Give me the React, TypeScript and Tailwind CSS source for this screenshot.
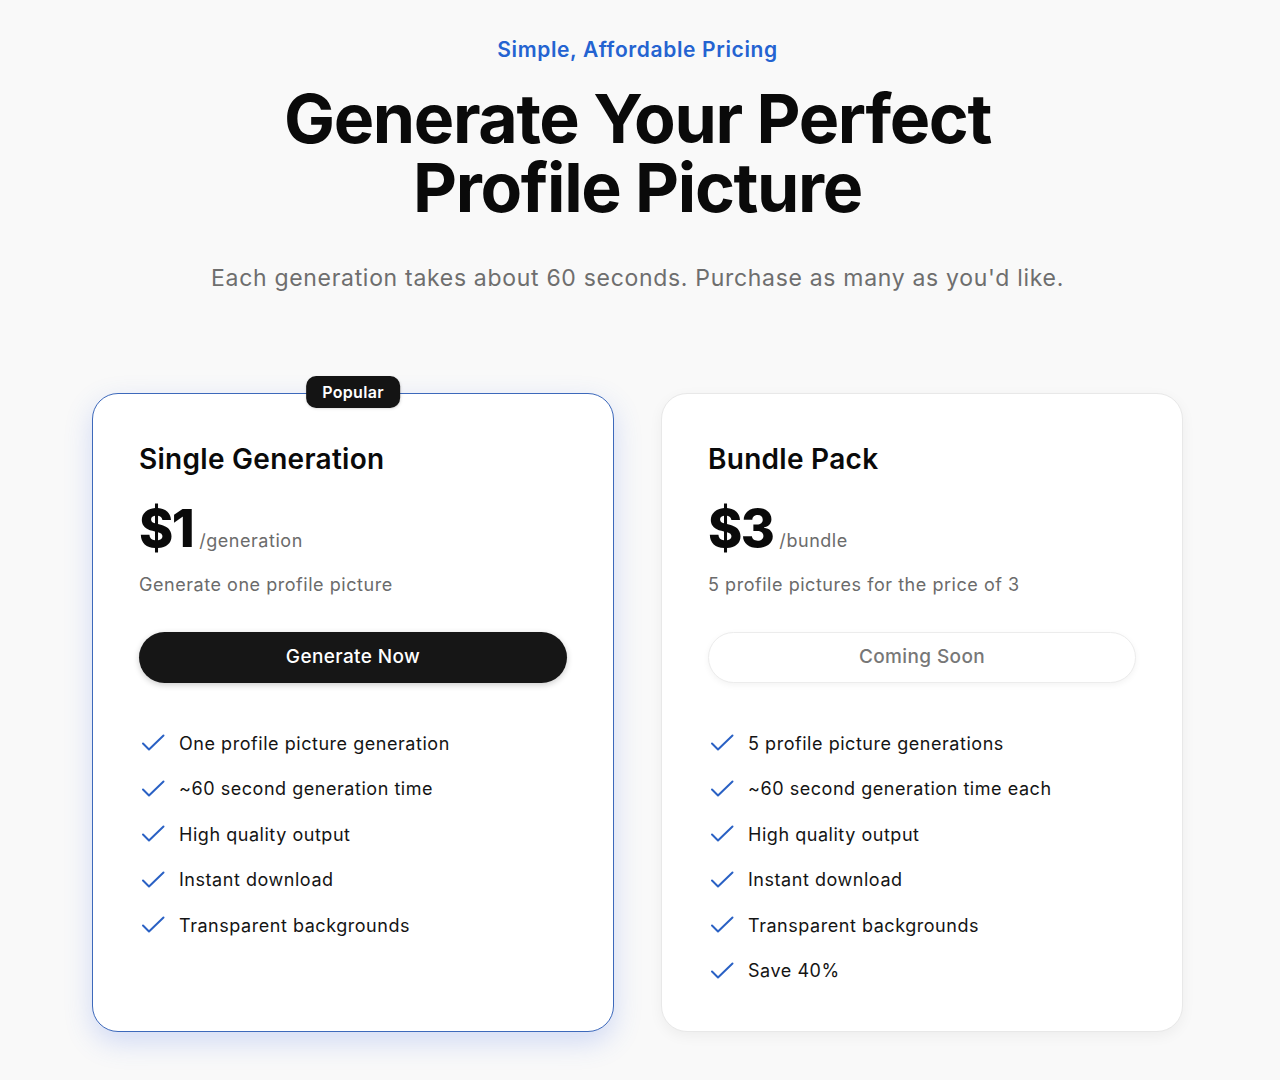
import { ReactNode } from 'react'

interface Plan {
  name: string
  price: string
  unit: string
  description: string
  features: string[]
  popular?: boolean
  cta: string
  disabled?: boolean
}

const plans: Plan[] = [
  {
    name: 'Single Generation',
    price: '$1',
    unit: '/generation',
    description: 'Generate one profile picture',
    cta: 'Generate Now',
    popular: true,
    features: [
      'One profile picture generation',
      '~60 second generation time',
      'High quality output',
      'Instant download',
      'Transparent backgrounds',
    ],
  },
  {
    name: 'Bundle Pack',
    price: '$3',
    unit: '/bundle',
    description: '5 profile pictures for the price of 3',
    cta: 'Coming Soon',
    disabled: true,
    features: [
      '5 profile picture generations',
      '~60 second generation time each',
      'High quality output',
      'Instant download',
      'Transparent backgrounds',
      'Save 40%',
    ],
  },
]

function CheckIcon() {
  return (
    <svg width="24" height="18" viewBox="0 0 24 18" fill="none" className="shrink-0">
      <path
        d="M2 9.5 L8 15.5 L22.5 1.5"
        stroke="#2a61c4"
        strokeWidth="2"
        strokeLinecap="round"
        strokeLinejoin="round"
      />
    </svg>
  )
}

function Feature({ children }: { children: ReactNode }) {
  return (
    <li className="flex items-center gap-[14px] pl-[2px] h-7 text-[18px] tracking-[0.03em] text-[#141414]">
      <CheckIcon />
      <span>{children}</span>
    </li>
  )
}

function PlanCard({ plan }: { plan: Plan }) {
  return (
    <div
      className={
        plan.popular
          ? 'relative bg-white rounded-[26px] border-[1.5px] border-[#3d69bb] shadow-[0_10px_28px_rgba(70,110,230,0.22)] px-[46px] pt-[49px] pb-[46px]'
          : 'relative bg-white rounded-[26px] border-[1.5px] border-[#e8e8e8] shadow-[0_4px_14px_rgba(0,0,0,0.05)] px-[46px] pt-[49px] pb-[46px]'
      }
    >
      {plan.popular && (
        <div className="absolute left-1/2 -translate-x-1/2 -top-[18px] bg-[#141414] text-white text-[16px] tracking-[0.02em] font-semibold rounded-[10px] h-[32px] px-[16px] flex items-center shadow-sm">
          Popular
        </div>
      )}
      <h3 className="text-[28px] leading-8 font-semibold tracking-[0.01em] text-[#0a0a0a]">{plan.name}</h3>
      <div className="mt-7 flex items-baseline gap-[6px]">
        <span className="text-[52px] leading-none font-extrabold tracking-[-0.03em] text-[#0a0a0a]">
          {plan.price}
        </span>
        <span className="text-[18px] tracking-[0.03em] text-[#6b6b6b]">{plan.unit}</span>
      </div>
      <p className="mt-4 text-[18px] leading-7 tracking-[0.03em] text-[#6b6b6b]">{plan.description}</p>
      <button
        className={
          plan.disabled
            ? 'mt-[33px] w-full h-[51px] rounded-full bg-white border border-[#ececec] shadow-[0_2px_6px_rgba(0,0,0,0.05)] text-[19px] tracking-[0.02em] font-medium text-[#777777]'
            : 'mt-[33px] w-full h-[51px] rounded-full bg-[#161616] shadow-[0_2px_6px_rgba(0,0,0,0.2)] text-[19px] tracking-[0.02em] font-medium text-white'
        }
      >
        {plan.cta}
      </button>
      <ul className="mt-[46px] flex flex-col gap-[17.5px]">
        {plan.features.map((f) => (
          <Feature key={f}>{f}</Feature>
        ))}
      </ul>
    </div>
  )
}

export default function App() {
  return (
    <div className="min-h-screen bg-[#f9f9f9] font-['Inter','Liberation_Sans',sans-serif] antialiased">
      <div className="ml-[92px] w-[1091px] pt-[36px] flex flex-col items-center text-center">
        <p className="text-[21px] leading-7 font-semibold tracking-[0.03em] text-[#2463d1]">
          Simple, Affordable Pricing
        </p>
        <h1 className="mt-5 text-[68px] leading-[69px] font-bold tracking-[-0.02em] text-[#0a0a0a]">
          Generate Your Perfect
          <br />
          Profile Picture
        </h1>
        <p className="mt-10 text-[23px] leading-8 tracking-[0.03em] text-[#6e6e6e]">
          Each generation takes about 60 seconds. Purchase as many as you'd like.
        </p>
      </div>
      <div className="ml-[92px] w-[1091px] mt-[99px] grid grid-cols-2 gap-[47px] text-left">
        {plans.map((p) => (
          <PlanCard key={p.name} plan={p} />
        ))}
      </div>
    </div>
  )
}
